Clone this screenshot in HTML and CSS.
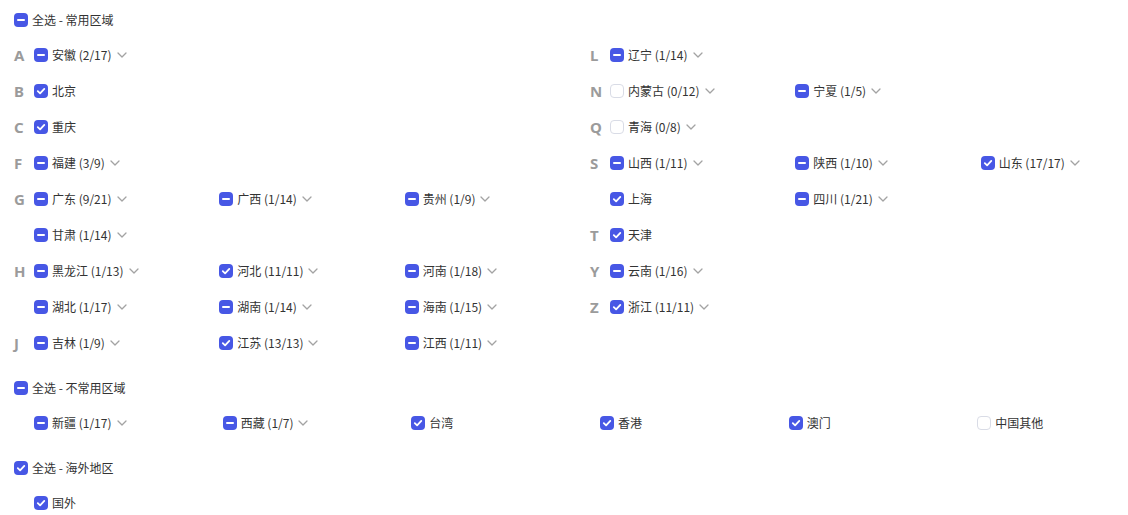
FILE: index.html
```html
<!DOCTYPE html>
<html lang="zh-CN">
<head>
<meta charset="utf-8">
<title>区域选择</title>
<link rel="stylesheet" href="styles.css">
</head>
<body>
<svg width="0" height="0" class="defs">
  <defs>
    <symbol id="chev" viewBox="0 0 10 6"><path d="M1 1 L5 5 L9 1" fill="none" stroke="#a3a3a3" stroke-width="1.3" stroke-linecap="round" stroke-linejoin="round"/></symbol>
    <symbol id="tick" viewBox="0 0 14 14"><path d="M3.8 7.2 L6.1 9.4 L10.3 4.9" fill="none" stroke="#fff" stroke-width="1.8" stroke-linecap="round" stroke-linejoin="round"/></symbol>
  </defs>
</svg>
<div class="page">
  <section class="section">
    <div class="head"><span class="cb ind"></span><span class="label">全选 - 常用区域</span></div>
    <div class="halves">
      <div class="half">
        <div class="row"><span class="letter">A</span><div class="cell"><span class="cb ind"></span><span class="label">安徽 (2/17)</span><svg class="chev"><use href="#chev"/></svg></div></div>
        <div class="row"><span class="letter">B</span><div class="cell"><span class="cb on"><svg><use href="#tick"/></svg></span><span class="label">北京</span></div></div>
        <div class="row"><span class="letter">C</span><div class="cell"><span class="cb on"><svg><use href="#tick"/></svg></span><span class="label">重庆</span></div></div>
        <div class="row"><span class="letter">F</span><div class="cell"><span class="cb ind"></span><span class="label">福建 (3/9)</span><svg class="chev"><use href="#chev"/></svg></div></div>
        <div class="row"><span class="letter">G</span>
          <div class="cell"><span class="cb ind"></span><span class="label">广东 (9/21)</span><svg class="chev"><use href="#chev"/></svg></div>
          <div class="cell"><span class="cb ind"></span><span class="label">广西 (1/14)</span><svg class="chev"><use href="#chev"/></svg></div>
          <div class="cell"><span class="cb ind"></span><span class="label">贵州 (1/9)</span><svg class="chev"><use href="#chev"/></svg></div>
        </div>
        <div class="row"><span class="letter"></span>
          <div class="cell"><span class="cb ind"></span><span class="label">甘肃 (1/14)</span><svg class="chev"><use href="#chev"/></svg></div>
        </div>
        <div class="row"><span class="letter">H</span>
          <div class="cell"><span class="cb ind"></span><span class="label">黑龙江 (1/13)</span><svg class="chev"><use href="#chev"/></svg></div>
          <div class="cell"><span class="cb on"><svg><use href="#tick"/></svg></span><span class="label">河北 (11/11)</span><svg class="chev"><use href="#chev"/></svg></div>
          <div class="cell"><span class="cb ind"></span><span class="label">河南 (1/18)</span><svg class="chev"><use href="#chev"/></svg></div>
        </div>
        <div class="row"><span class="letter"></span>
          <div class="cell"><span class="cb ind"></span><span class="label">湖北 (1/17)</span><svg class="chev"><use href="#chev"/></svg></div>
          <div class="cell"><span class="cb ind"></span><span class="label">湖南 (1/14)</span><svg class="chev"><use href="#chev"/></svg></div>
          <div class="cell"><span class="cb ind"></span><span class="label">海南 (1/15)</span><svg class="chev"><use href="#chev"/></svg></div>
        </div>
        <div class="row"><span class="letter">J</span>
          <div class="cell"><span class="cb ind"></span><span class="label">吉林 (1/9)</span><svg class="chev"><use href="#chev"/></svg></div>
          <div class="cell"><span class="cb on"><svg><use href="#tick"/></svg></span><span class="label">江苏 (13/13)</span><svg class="chev"><use href="#chev"/></svg></div>
          <div class="cell"><span class="cb ind"></span><span class="label">江西 (1/11)</span><svg class="chev"><use href="#chev"/></svg></div>
        </div>
      </div>
      <div class="half">
        <div class="row"><span class="letter">L</span><div class="cell"><span class="cb ind"></span><span class="label">辽宁 (1/14)</span><svg class="chev"><use href="#chev"/></svg></div></div>
        <div class="row"><span class="letter">N</span>
          <div class="cell"><span class="cb off"></span><span class="label">内蒙古 (0/12)</span><svg class="chev"><use href="#chev"/></svg></div>
          <div class="cell"><span class="cb ind"></span><span class="label">宁夏 (1/5)</span><svg class="chev"><use href="#chev"/></svg></div>
        </div>
        <div class="row"><span class="letter">Q</span><div class="cell"><span class="cb off"></span><span class="label">青海 (0/8)</span><svg class="chev"><use href="#chev"/></svg></div></div>
        <div class="row"><span class="letter">S</span>
          <div class="cell"><span class="cb ind"></span><span class="label">山西 (1/11)</span><svg class="chev"><use href="#chev"/></svg></div>
          <div class="cell"><span class="cb ind"></span><span class="label">陕西 (1/10)</span><svg class="chev"><use href="#chev"/></svg></div>
          <div class="cell"><span class="cb on"><svg><use href="#tick"/></svg></span><span class="label">山东 (17/17)</span><svg class="chev"><use href="#chev"/></svg></div>
        </div>
        <div class="row"><span class="letter"></span>
          <div class="cell"><span class="cb on"><svg><use href="#tick"/></svg></span><span class="label">上海</span></div>
          <div class="cell"><span class="cb ind"></span><span class="label">四川 (1/21)</span><svg class="chev"><use href="#chev"/></svg></div>
        </div>
        <div class="row"><span class="letter">T</span><div class="cell"><span class="cb on"><svg><use href="#tick"/></svg></span><span class="label">天津</span></div></div>
        <div class="row"><span class="letter">Y</span><div class="cell"><span class="cb ind"></span><span class="label">云南 (1/16)</span><svg class="chev"><use href="#chev"/></svg></div></div>
        <div class="row"><span class="letter">Z</span><div class="cell"><span class="cb on"><svg><use href="#tick"/></svg></span><span class="label">浙江 (11/11)</span><svg class="chev"><use href="#chev"/></svg></div></div>
        <div class="row"></div>
      </div>
    </div>
  </section>

  <section class="section">
    <div class="head"><span class="cb ind"></span><span class="label">全选 - 不常用区域</span></div>
    <div class="row six">
      <div class="cell"><span class="cb ind"></span><span class="label">新疆 (1/17)</span><svg class="chev"><use href="#chev"/></svg></div>
      <div class="cell"><span class="cb ind"></span><span class="label">西藏 (1/7)</span><svg class="chev"><use href="#chev"/></svg></div>
      <div class="cell"><span class="cb on"><svg><use href="#tick"/></svg></span><span class="label">台湾</span></div>
      <div class="cell"><span class="cb on"><svg><use href="#tick"/></svg></span><span class="label">香港</span></div>
      <div class="cell"><span class="cb on"><svg><use href="#tick"/></svg></span><span class="label">澳门</span></div>
      <div class="cell"><span class="cb off"></span><span class="label">中国其他</span></div>
    </div>
  </section>

  <section class="section">
    <div class="head"><span class="cb on"><svg><use href="#tick"/></svg></span><span class="label">全选 - 海外地区</span></div>
    <div class="row six">
      <div class="cell"><span class="cb on"><svg><use href="#tick"/></svg></span><span class="label">国外</span></div>
    </div>
  </section>
</div>
</body>
</html>
```

FILE: styles.css
```css
* { box-sizing: border-box; }
html, body {
  margin: 0;
  padding: 0;
  background: #fff;
  overflow: hidden;
}
body {
  font-family: "Noto Sans CJK SC", "Noto Sans", sans-serif;
  font-size: 12px;
  color: #333;
}
.defs { position: absolute; width: 0; height: 0; }
.page {
  width: 1166px;
  padding: 6px 0 0 14px;
  display: flex;
  flex-direction: column;
  gap: 13px;
}
.section {
  display: flex;
  flex-direction: column;
  gap: 3px;
}
.head {
  height: 28px;
  display: flex;
  align-items: center;
  gap: 4px;
}
.halves {
  display: grid;
  grid-template-columns: 576px 576px;
}
.half {
  display: flex;
  flex-direction: column;
}
.row {
  height: 36px;
  display: grid;
  grid-template-columns: 20px repeat(3, 1fr);
  align-items: center;
}
.row.six {
  padding-left: 20px;
  grid-template-columns: repeat(6, 1fr);
}
.letter {
  font-family: "Noto Sans", "Liberation Sans", sans-serif;
  font-weight: 700;
  font-size: 15px;
  color: #9b9b9b;
  line-height: 1;
}
.cell {
  display: flex;
  align-items: center;
  gap: 4px;
}
.label {
  line-height: 16px;
  white-space: nowrap;
}
.cb {
  width: 14px;
  height: 14px;
  border-radius: 4px;
  flex: none;
  display: inline-flex;
  align-items: center;
  justify-content: center;
  background: #4757e5;
}
.cb svg { width: 14px; height: 14px; display: block; }
.cb.ind::after {
  content: "";
  width: 8px;
  height: 2px;
  border-radius: 1px;
  background: #fff;
}
.cb.off {
  background: #fff;
  border: 1px solid #d9dce6;
}
.chev {
  width: 10px;
  height: 6px;
  margin-left: 1px;
  flex: none;
}
```
